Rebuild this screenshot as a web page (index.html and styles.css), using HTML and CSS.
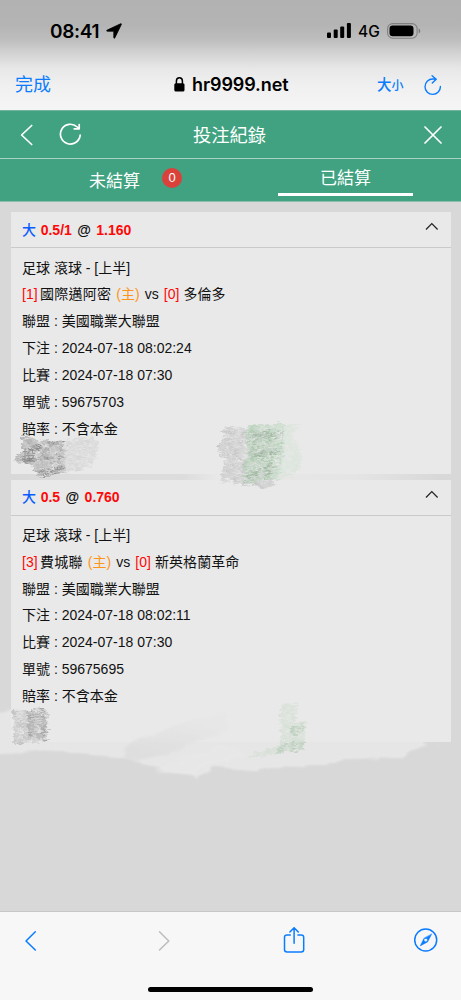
FILE: index.html
```html
<!DOCTYPE html>
<html lang="zh-Hant">
<head>
<meta charset="utf-8">
<meta name="viewport" content="width=device-width, initial-scale=1">
<title>投注紀錄</title>
<link rel="stylesheet" href="styles.css">
</head>
<body>
<div class="phone">
  <header class="browser-top">
    <div class="status">
      <span class="clock">08:41</span>
      <svg class="location" width="16" height="16" viewBox="0 0 16 16"><path stroke="#000" stroke-width=".8" stroke-linejoin="round" d="M14.600.8 1.200 7.100c-.9.500-.7 1.100.2 1.100h6.400v6.300c0 1 .7 1.100 1.100.2L15.300 1.500c.3-.7-.1-1-.7-.7z"/></svg>
      <svg class="signal" width="25" height="15" viewBox="0 0 25 15"><rect x="0" y="9.500" width="4" height="5.500" rx="1"/><rect x="6.700" y="6.500" width="4" height="8.500" rx="1"/><rect x="13.200" y="3.500" width="4" height="11.500" rx="1"/><rect x="19.900" y="0" width="4" height="15" rx="1"/></svg>
      <span class="network">4G</span>
      <svg class="battery" width="34" height="16" viewBox="0 0 34 16"><rect x=".6" y=".6" width="29.500" height="14.600" rx="5" fill="none" stroke="#808080" stroke-width="1.100"/><rect x="2.500" y="2.500" width="24" height="10.800" rx="3.200"/><path d="M31.700 5.500c2 .8 2 4 0 4.800z" fill="#777"/></svg>
    </div>
    <div class="address">
      <span class="done">完成</span>
      <span class="site"><svg width="11" height="15" viewBox="0 0 11 15"><rect x=".3" y="6.300" width="10.200" height="8.200" rx="1.500"/><path d="M2.400 7V4.100a3 3.300 0 0 1 6 0V7" fill="none" stroke="#000" stroke-width="1.500"/></svg><span>hr9999.net</span></span>
      <span class="text-size"><b>大</b><b class="small">小</b></span>
      <svg class="reload" width="18" height="21" viewBox="0 0 18 21" fill="none" stroke="#0a7cff" stroke-width="1.400" stroke-linecap="round" stroke-linejoin="round"><path d="M16.400 11.500A7.700 7.700 0 1 1 8.700 4h3.200M8.100.8 12.200 4.300 8.300 8.100"/></svg>
    </div>
  </header>

  <nav class="page-bar">
    <svg width="14" height="22" viewBox="0 0 14 22" class="icon"><path d="M11.700 1.500 1.600 11l10.100 9.500"/></svg>
    <svg width="23" height="23" viewBox="0 0 23 23" class="icon refresh"><path d="M21.200 12.200a9.900 9.900 0 1 1-3-8.200l1.600 1.500M20.200 1.500v4.300h-5"/></svg>
    <h1>投注紀錄</h1>
    <svg width="18" height="18" viewBox="0 0 18 18" class="icon close"><path d="m1 1 16 16M17 1 1 17"/></svg>
  </nav>
  <div class="tabs">
    <div class="tab pending"><span>未結算</span><i class="count">0</i></div>
    <div class="tab settled"><span>已結算</span></div>
  </div>

  <main class="records">
    <section class="record first">
      <h2><span class="pick">大</span> <span class="hot">0.5/1</span> <span class="at">@</span> <span class="hot">1.160</span><svg class="chevron" width="14" height="9" viewBox="0 0 14 9"><path d="M1 7.500 6.800 1.500l5.800 6"/></svg></h2>
      <div class="details">
        <p>足球 滾球 - [上半]</p>
        <p class="match"><span class="hot">[1]</span> <span class="team">國際邁阿密</span> <span class="home">(主)</span> <span class="versus">vs</span> <span class="hot">[0]</span> 多倫多</p>
        <p>聯盟 : 美國職業大聯盟</p>
        <p>下注 : 2024-07-18 08:02:24</p>
        <p>比賽 : 2024-07-18 07:30</p>
        <p>單號 : 59675703</p>
        <p>賠率 : 不含本金</p>
        <p class="faded">投</p>
      </div>
    </section>
    <section class="record second">
      <h2><span class="pick">大</span> <span class="hot">0.5</span> <span class="at">@</span> <span class="hot">0.760</span><svg class="chevron" width="14" height="9" viewBox="0 0 14 9"><path d="M1 7.500 6.800 1.500l5.800 6"/></svg></h2>
      <div class="details">
        <p>足球 滾球 - [上半]</p>
        <p class="match"><span class="hot">[3]</span> <span class="team">費城聯</span> <span class="home">(主)</span> <span class="versus">vs</span> <span class="hot">[0]</span> 新英格蘭革命</p>
        <p>聯盟 : 美國職業大聯盟</p>
        <p>下注 : 2024-07-18 08:02:11</p>
        <p>比賽 : 2024-07-18 07:30</p>
        <p>單號 : 59675695</p>
        <p>賠率 : 不含本金</p>
      </div>
    </section>
    <svg class="brush" width="461" height="709" viewBox="0 202 461 709">
      <defs>
        <filter id="grain" x="-10%" y="-10%" width="120%" height="120%">
          <feTurbulence type="fractalNoise" baseFrequency=".12 .36" numOctaves="3" seed="8" result="n"/>
          <feColorMatrix in="n" type="matrix" values="0 0 0 0 0 0 0 0 0 0 0 0 0 0 0 1.800 0 0 0 -.3" result="m"/>
          <feComposite in="SourceGraphic" in2="m" operator="in" result="g"/>
          <feDisplacementMap in="g" in2="n" scale="10" xChannelSelector="R" yChannelSelector="G"/>
          <feGaussianBlur stdDeviation=".75"/>
        </filter>
        <filter id="rough" x="-5%" y="-20%" width="110%" height="140%">
          <feTurbulence type="fractalNoise" baseFrequency=".03 .16" numOctaves="3" seed="3" result="n"/>
          <feDisplacementMap in="SourceGraphic" in2="n" scale="10" xChannelSelector="R" yChannelSelector="G"/>
          <feGaussianBlur stdDeviation="1.300"/>
        </filter>
        <linearGradient id="seam">
          <stop offset="0" stop-color="#e9e9e9" stop-opacity="0"/>
          <stop offset=".17" stop-color="#e9e9e9" stop-opacity=".3"/>
          <stop offset=".4" stop-color="#e9e9e9" stop-opacity=".25"/>
          <stop offset=".48" stop-color="#e9e9e9" stop-opacity=".95"/>
          <stop offset=".8" stop-color="#e9e9e9" stop-opacity=".75"/>
          <stop offset="1" stop-color="#e9e9e9" stop-opacity="0"/>
        </linearGradient>
        <linearGradient id="veil" x1="0" y1="1" x2=".6" y2="0">
          <stop offset="0" stop-color="#d8d8d8"/>
          <stop offset="1" stop-color="#e7e7e7"/>
        </linearGradient>
      </defs>
      <rect x="11" y="474" width="430" height="6" fill="url(#seam)"/>
      <path class="light" filter="url(#rough)" opacity=".88" d="M-8 714 12 711 440 711 440 741 424 742 408 757 347 758 337 763 306 768 280 767 251 771 216 768 196 778 157 768 126 758 82 754 36 751-8 755z"/>
      <path filter="url(#rough)" fill="url(#veil)" opacity=".65" d="M122 756l9-14 21-7 34-14 40-8 3 18-29 10-45 17-20 3z"/>
      <path class="light" filter="url(#rough)" opacity=".6" d="M154 771 220 745l28 8-62 20z"/>
      <g filter="url(#grain)">
        <path fill="#999" opacity=".75" d="m22 434 19 7 24-1 0 15-1 16-24 6-8-12-20-4 10-10z"/>
        <path fill="#777" opacity=".55" d="m30 446 34-6v4l-34 7zM20 458l44-4v4l-40 5zM36 472l30-9v8l-23 5z"/>
        <path fill="#c4c4c4" opacity=".5" d="m63 440 29-5 7 9-7 24-29 5z"/>
        <path fill="#b2b2b2" opacity=".6" d="m223 427 60 4 1 23-4 10-8 17 5 4-11 3-46-6 5-25-9-9 8-10z"/>
        <path fill="#a6cba9" opacity=".7" d="m247 426 38-3-5 56-37 3 3-28z"/>
        <path fill="#c8dfc9" opacity=".45" d="m275 424 27-1-10 12 8 15 2 15-10 12-20 2z"/>
        <path fill="#648869" opacity=".35" d="m251 432 32-1v5l-30 6zM249 450l30-1-2 5-27 3zM250 472l24-7v10l-30 6z"/>
        <path fill="#aaa" opacity=".6" d="m13 711 32-3 4 7-2 11 1 14-34 4z"/>
        <path fill="#888" opacity=".5" d="m27 710 18-1 1 15 3 6-4 8-16-1z"/>
        <path fill="#b8d2b9" opacity=".4" d="m280 706 18-3-2 19 11-1-3 28-56 9 8-6 25-6z"/>
        <path fill="#80ad85" opacity=".3" d="m288 728 16-4-1 9-17 3zM284 743l20-2v9l-31 5z"/>
      </g>
    </svg>
  </main>

  <footer class="toolbar">
    <div class="actions">
      <svg width="14" height="22" viewBox="0 0 14 22"><path d="M11.300 1.800 2 11l9.300 9"/></svg>
      <svg class="disabled" width="14" height="22" viewBox="0 0 14 22"><path d="M2.500 1.800 11.800 11l-9.300 9"/></svg>
      <svg class="share" width="22" height="28" viewBox="0 0 22 28"><path d="M7.300 9H4.100C2.600 9 1.500 9.700 1.500 11.200v12.500c0 1.500 1 2.200 2.600 2.200h14c1.600 0 2.600-.7 2.600-2.200V11.200c0-1.500-1-2.200-2.600-2.200h-3.200M11.100 17.200V2M6.900 6l4.200-4.300L15.300 6"/></svg>
      <svg class="compass" width="24" height="24" viewBox="0 0 24 24"><circle cx="11.700" cy="12" r="11"/><path fill="#0a7cff" stroke-width=".5" fill-rule="evenodd" d="m17.600 6.200-4 7.700-7.400 4 3.700-7.500zM11.700 10.200a1.800 1.800 0 1 0 .1 3.600 1.800 1.800 0 0 0-.1-3.600z"/></svg>
    </div>
    <div class="home-line"></div>
  </footer>
</div>
</body>
</html>
```
FILE: styles.css
```css
* { box-sizing: border-box; }
body { margin: 0; font-family: "Liberation Sans", "Noto Sans CJK TC", sans-serif; }
svg { display: block; flex: none; }
h1, h2, p { margin: 0; font-weight: 400; }
.phone { width: 461px; height: 1000px; display: flex; flex-direction: column; overflow: hidden; background: #d8d8d8; }

.browser-top { height: 110px; flex: none; background: linear-gradient(#b2b2b2 0, #b4b4b4 25px, #bebebe 40px, #d2d2d2 53px, #e7e7e7 68px, #f0f0f0 85px, #f5f5f5 110px); }
.status { height: 62px; display: flex; align-items: center; padding-left: 50px; }
.clock { width: 54px; margin-top: 2px; font: 600 19px/24px Inter, sans-serif; letter-spacing: -.3px; }
.location { margin-left: 2px; }
.signal { margin: -1px 0 0 205px; }
.network { width: 23px; margin: 2px 0 0 6px; font: 500 15.500px/20px Inter, sans-serif; }
.battery { margin-left: 6px; }
.address { height: 46px; display: flex; align-items: center; padding-left: 15px; color: #0a7cff; }
.done { width: 159px; font-size: 18px; line-height: 24px; }
.site { width: 203px; display: flex; align-items: center; gap: 7px; color: #000; font: 600 18px/24px Inter, sans-serif; letter-spacing: -.1px; }
.site svg { margin-top: -2px; }
.text-size { width: 47px; font-size: 14.500px; line-height: 20px; white-space: nowrap; }
.text-size b { font-weight: 500; }
.text-size .small { font-size: 12px; }

.page-bar { height: 49px; flex: none; display: flex; align-items: center; padding-left: 20px; background: #40a280; border-top: 1px solid #71b69c; border-bottom: 1px solid #abd3c5; color: #fff; }
.icon { fill: none; stroke: #fff; stroke-width: 1.700; stroke-linecap: round; stroke-linejoin: round; }
.refresh { margin-left: 25px; }
.page-bar h1 { width: 73px; margin: 2px 0 0 111px; font-size: 18.300px; line-height: 24px; white-space: nowrap; }
.close { margin-left: 158px; }
.tabs { height: 43px; flex: none; display: flex; background: #40a280; border-bottom: 1px solid #8ebfae; color: #fff; font-size: 17px; }
.tab { height: 100%; display: flex; }
.pending { width: 230px; padding: 11px 0 0 89px; line-height: 24px; }
.count { width: 20px; height: 20px; margin: -2px 0 0 22px; border-radius: 50%; background: #db413b; text-align: center; font: 400 13px/20px "Liberation Sans", sans-serif; }
.settled { width: 135px; height: 37px; margin-left: 48px; padding-top: 8px; justify-content: center; line-height: 24px; border-bottom: 3px solid #fff; }

.records { position: relative; height: 709px; flex: none; padding: 10px 10px 0 11px; background: #d8d8d8; }
.record { background: #e9e9e9; color: #111; font-size: 14px; }
.first { height: 262px; }
.second { height: 262px; margin-top: 6px; }
.record h2 { position: relative; height: 36px; padding-left: 11px; border-bottom: 1px solid #cacaca; font-size: 14px; line-height: 36px; font-weight: 700; white-space: pre; }
.second h2 { line-height: 35px; }
.pick { margin-right: .8px; color: #0b5cff; font-weight: 500; }
.at { margin: 0 1.500px; }
.hot { color: #ff0808; }
.home { color: #ff941a; }
.team { margin: 0 1.200px 0 -1.600px; letter-spacing: .2px; }
.versus { margin: 0 1px; }
.match { letter-spacing: .05px; }
.chevron { position: absolute; right: 12px; top: 10px; fill: none; stroke: #222; stroke-width: 1.200; }
.details { padding: 6.600px 11px 0; }
.second .details { padding-top: 6px; }
.details p { height: 26.830px; line-height: 26.830px; white-space: nowrap; }
.details .faded { color: #777; opacity: .7; }
.brush { position: absolute; left: 0; top: 0; pointer-events: none; }
.light { fill: #e9e9e9; }

.toolbar { height: 90px; flex: none; background: #f7f7f7; border-top: 1px solid #c7c7c7; }
.actions { height: 57px; display: flex; align-items: center; padding-left: 24px; fill: none; stroke: #0a7cff; stroke-width: 1.500; stroke-linecap: round; stroke-linejoin: round; }
.disabled { margin-left: 119px; stroke: #bdbdbd; }
.share { margin: -2px 0 0 112px; }
.compass { margin: -2px 0 0 109px; }
.home-line { width: 165px; height: 5px; margin: 18px auto 0; border-radius: 3px; background: #000; }
```
